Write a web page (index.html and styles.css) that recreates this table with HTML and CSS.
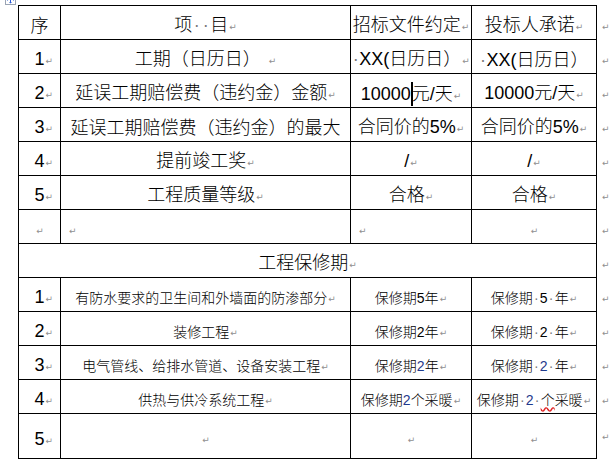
FILE: index.html
```html
<!DOCTYPE html>
<html lang="zh-CN">
<head>
<meta charset="utf-8">
<title>工程保修期</title>
<link rel="stylesheet" href="styles.css">
</head>
<body>
<div class="page">
  <span class="handle"><svg width="11" height="11" viewBox="0 0 11 11"><rect x="0.5" y="0.5" width="10" height="10" fill="#fff" stroke="#9aa4b4"/><path d="M5.5 2v7M2 5.5h7" stroke="#2a5bd7" stroke-width="1"/><path d="M5.5 1.5l-1.5 1.5h3zM5.5 9.5l-1.5-1.5h3zM1.5 5.5l1.5-1.5v3zM9.5 5.5l-1.5-1.5v3z" fill="#2a5bd7"/></svg></span>
  <table class="grid">
    <colgroup><col class="c1"><col class="c2"><col class="c3"><col class="c4"><col class="c5"></colgroup>
    <tr>
      <td>序</td>
      <td>项<span class="sp">·</span><span class="sp">·</span>目<span class="pm">↵</span></td>
      <td>招标文件约定<span class="pm">↵</span></td>
      <td>投标人承诺<span class="pm">↵</span></td>
      <td class="end"><span class="pm">↵</span></td>
    </tr>
    <tr>
      <td class="num">1<span class="pm">↵</span></td>
      <td>工期（日历日）<span class="pm pm-gap">↵</span></td>
      <td><span class="sp sp-s">·</span>XX(日历日）<span class="pm">↵</span></td>
      <td><span class="sp sp-s">·</span>XX(日历日）</td>
      <td class="end"><span class="pm">↵</span></td>
    </tr>
    <tr>
      <td class="num">2<span class="pm">↵</span></td>
      <td>延误工期赔偿费（违约金）金额<span class="pm">↵</span></td>
      <td>10000<span class="caret"></span>元/天<span class="pm">↵</span></td>
      <td>10000元/天<span class="pm">↵</span></td>
      <td class="end"><span class="pm">↵</span></td>
    </tr>
    <tr>
      <td class="num">3<span class="pm">↵</span></td>
      <td>延误工期赔偿费（违约金）的最大</td>
      <td>合同价的5%<span class="pm">↵</span></td>
      <td>合同价的5%<span class="pm">↵</span></td>
      <td class="end"><span class="pm">↵</span></td>
    </tr>
    <tr>
      <td class="num">4<span class="pm">↵</span></td>
      <td>提前竣工奖<span class="pm">↵</span></td>
      <td>/<span class="pm">↵</span></td>
      <td>/<span class="pm">↵</span></td>
      <td class="end"><span class="pm">↵</span></td>
    </tr>
    <tr>
      <td class="num">5<span class="pm">↵</span></td>
      <td>工程质量等级<span class="pm">↵</span></td>
      <td>合格<span class="pm">↵</span></td>
      <td>合格<span class="pm">↵</span></td>
      <td class="end"><span class="pm">↵</span></td>
    </tr>
    <tr class="blank">
      <td><span class="pm">↵</span></td>
      <td class="left"><span class="pm">↵</span></td>
      <td class="left"><span class="pm">↵</span></td>
      <td><span class="pm">↵</span></td>
      <td class="end"><span class="pm">↵</span></td>
    </tr>
    <tr>
      <td colspan="4">工程保修期<span class="pm">↵</span></td>
      <td class="end"><span class="pm">↵</span></td>
    </tr>
    <tr class="small">
      <td class="num">1<span class="pm">↵</span></td>
      <td>有防水要求的卫生间和外墙面的防渗部分<span class="pm">↵</span></td>
      <td>保修期5年<span class="pm">↵</span></td>
      <td>保修期<span class="sp">·</span>5<span class="sp">·</span>年<span class="pm">↵</span></td>
      <td class="end"><span class="pm">↵</span></td>
    </tr>
    <tr class="small">
      <td class="num">2<span class="pm">↵</span></td>
      <td>装修工程<span class="pm">↵</span></td>
      <td>保修期2年<span class="pm">↵</span></td>
      <td>保修期<span class="sp">·</span>2<span class="sp">·</span>年<span class="pm">↵</span></td>
      <td class="end"><span class="pm">↵</span></td>
    </tr>
    <tr class="small">
      <td class="num">3<span class="pm">↵</span></td>
      <td>电气管线、给排水管道、设备安装工程<span class="pm">↵</span></td>
      <td>保修期<span class="blue">2</span>年<span class="pm">↵</span></td>
      <td>保修期<span class="sp">·</span><span class="blue">2</span><span class="sp">·</span>年<span class="pm">↵</span></td>
      <td class="end"><span class="pm">↵</span></td>
    </tr>
    <tr class="small">
      <td class="num">4<span class="pm">↵</span></td>
      <td>供热与供冷系统工程<span class="pm">↵</span></td>
      <td>保修期<span class="blue">2</span>个采暖<span class="pm">↵</span></td>
      <td>保修期<span class="sp">·</span><span class="blue">2</span><span class="sp">·</span><span class="spell">个</span>采暖<span class="pm">↵</span></td>
      <td class="end"><span class="pm">↵</span></td>
    </tr>
    <tr class="small last">
      <td class="num">5<span class="pm">↵</span></td>
      <td><span class="pm">↵</span></td>
      <td><span class="pm">↵</span></td>
      <td><span class="pm">↵</span></td>
      <td class="end end-up"><span class="pm">↵</span></td>
    </tr>
  </table>
  <span class="corner"></span>
</div>
</body>
</html>
```

FILE: styles.css
```css
html, body {
  margin: 0;
  padding: 0;
  background: #fff;
}

body {
  font-family: "Liberation Sans", "Noto Sans CJK SC", sans-serif;
  color: #000;
}

.page {
  position: relative;
  padding: 5px 0 0 18px;
}

.handle {
  position: absolute;
  left: 5px;
  top: -6px;
  line-height: 0;
}

.corner {
  position: absolute;
  left: 595px;
  top: 460px;
  width: 5px;
  height: 5px;
  border: 1px solid #8c8c8c;
  background: #fff;
}

.grid {
  border-collapse: collapse;
  table-layout: fixed;
  width: 594px;
}

.c1 { width: 42px; }
.c2 { width: 290px; }
.c3 { width: 121px; }
.c4 { width: 125px; }
.c5 { width: 16px; }

.grid tr {
  height: 34px;
}

.grid tr.last {
  height: 45px;
}

.grid td {
  border: 1px solid #000;
  padding: 7px 0 0;
  text-align: center;
  vertical-align: middle;
  white-space: nowrap;
  overflow: hidden;
  font-size: 18px;
  font-weight: 300;
  line-height: 22px;
}

.grid td.num {
  text-align: right;
  padding-right: 7px;
}

.grid td.left {
  text-align: left;
  padding-left: 7px;
}

.grid td.end {
  border: none;
  text-align: left;
  padding-left: 4px;
}

.grid td.end-up {
  padding-top: 0;
}

.small td {
  font-size: 14px;
}

.small td.num {
  font-size: 18px;
}

.pm {
  font-family: "DejaVu Sans", sans-serif;
  font-size: 9px;
  font-weight: normal;
  color: #8f8f8f;
  margin-left: 1px;
  vertical-align: 1px;
}

.pm-gap {
  margin-left: 8px;
}

.sp {
  display: inline-block;
  width: 0.5em;
  text-align: center;
  color: #7a7a7a;
  font-size: inherit;
}

.sp-s {
  width: 7px;
}

.caret {
  display: inline-block;
  width: 2px;
  height: 24px;
  background: #000;
  vertical-align: -6px;
  margin: 0 -1px 0 0;
}

.blue {
  color: #1f3a8c;
}

.spell {
  text-decoration: underline wavy #e02020;
  text-decoration-skip-ink: none;
  text-underline-offset: 2px;
}
```
